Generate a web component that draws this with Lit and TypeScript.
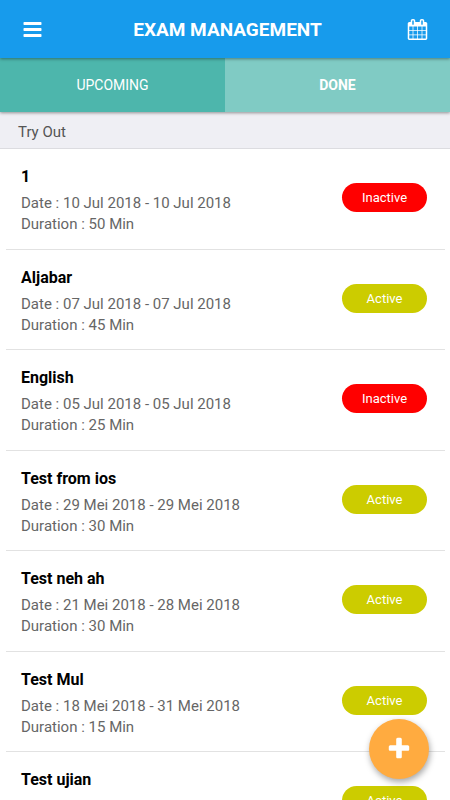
import { LitElement, html, css } from "lit";
import { customElement, property, state } from "lit/decorators.js";
import { classMap } from "lit/directives/class-map.js";

interface Exam {
  name: string;
  from: string;
  to: string;
  minutes: number;
  active: boolean;
}

const EXAMS: Exam[] = [
  { name: "1", from: "10 Jul 2018", to: "10 Jul 2018", minutes: 50, active: false },
  { name: "Aljabar", from: "07 Jul 2018", to: "07 Jul 2018", minutes: 45, active: true },
  { name: "English", from: "05 Jul 2018", to: "05 Jul 2018", minutes: 25, active: false },
  { name: "Test from ios", from: "29 Mei 2018", to: "29 Mei 2018", minutes: 30, active: true },
  { name: "Test neh ah", from: "21 Mei 2018", to: "28 Mei 2018", minutes: 30, active: true },
  { name: "Test Mul", from: "18 Mei 2018", to: "31 Mei 2018", minutes: 15, active: true },
  { name: "Test ujian", from: "18 Mei 2018", to: "31 Mei 2018", minutes: 15, active: true },
];

const BARS =
  "M1664 1344v128q0 26-19 45t-45 19h-1408q-26 0-45-19t-19-45v-128q0-26 19-45t45-19h1408q26 0 45 19t19 45zm0-512v128q0 26-19 45t-45 19h-1408q-26 0-45-19t-19-45v-128q0-26 19-45t45-19h1408q26 0 45 19t19 45zm0-512v128q0 26-19 45t-45 19h-1408q-26 0-45-19t-19-45v-128q0-26 19-45t45-19h1408q26 0 45 19t19 45z";
const CALENDAR =
  "M192 1664h288v-288h-288v288zm352 0h320v-288h-320v288zm-352-352h288v-320h-288v320zm352 0h320v-320h-320v320zm-352-384h288v-288h-288v288zm736 736h320v-288h-320v288zm-384-736h320v-288h-320v288zm768 736h288v-288h-288v288zm-384-352h320v-320h-320v320zm-352-864v-288q0-13-9.5-22.5t-22.5-9.5h-64q-13 0-22.5 9.5t-9.5 22.5v288q0 13 9.5 22.5t22.5 9.5h64q13 0 22.5-9.5t9.5-22.5zm736 864h288v-320h-288v320zm-384-384h320v-288h-320v288zm384 0h288v-288h-288v288zm32-480v-288q0-13-9.5-22.5t-22.5-9.5h-64q-13 0-22.5 9.5t-9.5 22.5v288q0 13 9.5 22.5t22.5 9.5h64q13 0 22.5-9.5t9.5-22.5zm384-64v1280q0 52-38 90t-90 38h-1408q-52 0-90-38t-38-90v-1280q0-52 38-90t90-38h128v-96q0-66 47-113t113-47h64q66 0 113 47t47 113v96h384v-96q0-66 47-113t113-47h64q66 0 113 47t47 113v96h128q52 0 90 38t38 90z";
const PLUS =
  "M1600 736v192q0 40-28 68t-68 28h-416v416q0 40-28 68t-68 28h-192q-40 0-68-28t-28-68v-416h-416q-40 0-68-28t-28-68v-192q0-40 28-68t68-28h416v-416q0-40 28-68t68-28h192q40 0 68 28t28 68v416h416q40 0 68 28t28 68z";

const icon = (path: string) => html`
  <svg class="icon" viewBox="0 0 1792 1792" aria-hidden="true"><path d=${path}></path></svg>
`;

@customElement("exam-row")
export class ExamRow extends LitElement {
  static styles = css`
    :host {
      display: flex;
      align-items: flex-start;
      justify-content: space-between;
      padding: 18px 18px 13px 15px;
      border-bottom: 1px solid #e2e2e2;
    }
    .name {
      margin: 0 0 6px;
      font-size: 16px;
      line-height: 20px;
      font-weight: 700;
      color: #000;
    }
    .detail {
      margin: 0;
      font-size: 15px;
      line-height: 21px;
      color: #666;
    }
    .status {
      flex: none;
      width: 85px;
      height: 29px;
      margin-top: 16px;
      padding: 0;
      border: 0;
      border-radius: 15px;
      background: #f00;
      color: #fff;
      font: inherit;
      font-size: 13px;
      cursor: pointer;
    }
    .status.active {
      background: #cc0;
    }
  `;

  @property({ attribute: false }) exam!: Exam;

  render() {
    const { name, from, to, minutes, active } = this.exam;
    return html`
      <div>
        <h2 class="name">${name}</h2>
        <p class="detail">Date : ${from} - ${to}</p>
        <p class="detail">Duration : ${minutes} Min</p>
      </div>
      <button class=${classMap({ status: true, active })}>${active ? "Active" : "Inactive"}</button>
    `;
  }
}

@customElement("app-root")
export class AppRoot extends LitElement {
  static styles = css`
    :host {
      display: flex;
      flex-direction: column;
      height: 100vh;
      background: #fff;
      font-family: Roboto, "Liberation Sans", sans-serif;
    }
    .icon {
      display: block;
      width: 21px;
      height: 21px;
      fill: currentColor;
    }
    .bar {
      position: relative;
      z-index: 2;
      flex: none;
      display: flex;
      align-items: center;
      justify-content: space-between;
      height: 58px;
      padding: 0 12px;
      background: #179bec;
      color: #fff;
      box-shadow: 0 1px 3px rgba(0, 0, 0, 0.4);
    }
    .title {
      margin: 0;
      padding: 2px 0 0 5px;
      font-size: 19px;
      line-height: 24px;
      font-weight: 700;
    }
    .tool {
      display: grid;
      place-items: center;
      width: 40px;
      height: 40px;
      padding: 0;
      border: 0;
      background: none;
      color: inherit;
      cursor: pointer;
    }
    .tabs {
      position: relative;
      z-index: 1;
      flex: none;
      display: flex;
      height: 54px;
      box-shadow: 0 1px 3px rgba(0, 0, 0, 0.4);
    }
    .tab {
      flex: 1;
      padding: 0;
      border: 0;
      background: #4db6ac;
      color: #fff;
      font: inherit;
      font-size: 14px;
      cursor: pointer;
    }
    .tab.selected {
      background: #80cbc4;
      font-weight: 700;
    }
    .section {
      flex: none;
      margin: 0;
      padding: 10px 18px 6px;
      border-bottom: 1px solid #dcdce0;
      background: #efeff4;
      color: #555;
      font-size: 15px;
      line-height: 20px;
      font-weight: 400;
    }
    .list {
      flex: 1;
      min-height: 0;
      padding: 0 5px 0 6px;
      overflow-y: auto;
      scrollbar-width: none;
    }
    .list exam-row:nth-child(odd) {
      padding-bottom: 14px;
    }
    .add {
      position: fixed;
      right: 21px;
      bottom: 21px;
      display: grid;
      place-items: center;
      width: 60px;
      height: 60px;
      padding: 0;
      border: 0;
      border-radius: 50%;
      background: #ffab40;
      color: #fff;
      box-shadow: 1px 3px 6px rgba(0, 0, 0, 0.35);
      cursor: pointer;
    }
    .add .icon {
      width: 26px;
      height: 26px;
    }
  `;

  @state() private selected = "DONE";

  render() {
    return html`
      <header class="bar">
        <button class="tool" aria-label="Menu">${icon(BARS)}</button>
        <h1 class="title">EXAM MANAGEMENT</h1>
        <button class="tool" aria-label="Calendar">${icon(CALENDAR)}</button>
      </header>
      <nav class="tabs" role="tablist">
        ${["UPCOMING", "DONE"].map(
          (name) => html`
            <button
              role="tab"
              aria-selected=${name === this.selected ? "true" : "false"}
              class=${classMap({ tab: true, selected: name === this.selected })}
              @click=${() => (this.selected = name)}
            >${name}</button>
          `
        )}
      </nav>
      <h2 class="section">Try Out</h2>
      <main class="list">${EXAMS.map((exam) => html`<exam-row .exam=${exam}></exam-row>`)}</main>
      <button class="add" aria-label="Add exam">${icon(PLUS)}</button>
    `;
  }
}
